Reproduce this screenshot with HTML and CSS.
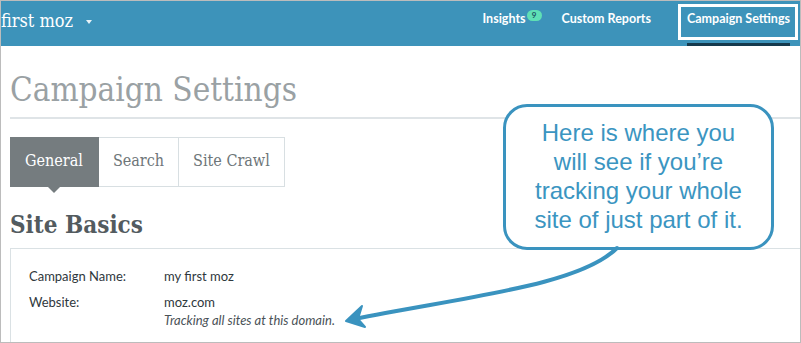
FILE: index.html
```html
<!DOCTYPE html>
<html lang="en">
	<head>
		<meta charset="UTF-8" />
		<meta name="viewport" content="width=device-width, initial-scale=1.0" />
		<title>Campaign Settings | first moz</title>
		<link rel="stylesheet" href="styles.css">
	</head>
	<body>
		<div class="window">
			<header class="topbar">
				<div class="brand">first moz<span class="caret"></span></div>
				<nav class="menu">
					<a class="menu-link" href="#">Insights<span class="badge">9</span></a>
					<a class="menu-link reports" href="#">Custom Reports</a>
					<a class="menu-link active" href="#">Campaign Settings</a>
				</nav>
			</header>
			<main class="page">
				<h1 class="page-title">Campaign Settings</h1>
				<ul class="tabs">
					<li class="tab current">General</li>
					<li class="tab">Search</li>
					<li class="tab">Site Crawl</li>
				</ul>
				<h2 class="section-title">Site Basics</h2>
				<div class="panel">
					<div class="field">
						<div class="field-label">Campaign Name:</div>
						<div class="field-value">my first moz</div>
					</div>
					<div class="field">
						<div class="field-label">Website:</div>
						<div class="field-value">
							moz.com
							<div class="field-note">Tracking all sites at this domain.</div>
						</div>
					</div>
				</div>
			</main>
			<!-- annotation -->
			<div class="callout">Here is where you<br />will see if you’re<br />tracking your whole<br />site of just part of it.</div>
			<svg class="arrow" width="801" height="343" viewBox="0 0 801 343">
				<path d="M617 248 C580 285 470 296 354 319" fill="none" stroke="#3a93bf" stroke-width="4" stroke-linecap="round" />
				<path d="M362 306 L346 321 L365 327 L358 319 Z" fill="#3a93bf" stroke="#3a93bf" stroke-width="2" stroke-linejoin="round" />
			</svg>
		</div>
	</body>
</html>
```

FILE: styles.css
```css
body {
	margin: 0;
	padding: 0;
	background: #fff;
	font-family: "Lato", "Liberation Sans", Arial, sans-serif;
}
.window {
	position: relative;
	width: 801px;
	height: 343px;
	box-sizing: border-box;
	border: 1px solid #bcbcbc;
	overflow: hidden;
	background: #fff;
}
.topbar {
	display: flex;
	align-items: flex-start;
	height: 45px;
	background: #3d93ba;
	color: #fff;
}
.brand {
	display: flex;
	align-items: center;
	padding-top: 10px;
	font-family: "DejaVu Serif Condensed", "DejaVu Serif", serif;
	font-size: 18px;
	line-height: 20px;
	white-space: nowrap;
}
.caret {
	width: 0;
	height: 0;
	margin-left: 13px;
	margin-top: 2px;
	border-left: 3.5px solid transparent;
	border-right: 3.5px solid transparent;
	border-top: 4px solid #e8f2f7;
}
.menu {
	display: flex;
	align-items: flex-start;
	margin-left: auto;
	margin-right: 2px;
	padding-top: 3px;
}
.menu-link {
	position: relative;
	display: flex;
	align-items: flex-start;
	padding: 7px 0;
	color: #fff;
	text-decoration: none;
	font-weight: 700;
	font-size: 12.5px;
	line-height: 16px;
	white-space: nowrap;
}
.badge {
	display: inline-block;
	width: 15px;
	height: 11px;
	margin-left: 1px;
	margin-top: -1px;
	border-radius: 6px;
	background: #5fe0b5;
	color: #1d5466;
	font-size: 8px;
	line-height: 11px;
	text-align: center;
}
.reports {
	margin-left: 20px;
	margin-right: 27px;
}
.active {
	padding: 4px 5px 10px 6px;
	border: 3px solid #fff;
}
.active::after {
	content: "";
	position: absolute;
	left: 6px;
	right: 5px;
	bottom: -9px;
	height: 3px;
	background: #153a4d;
}
.page {
	padding: 0 0 0 9px;
}
.page-title {
	margin: 24px 0 0 0;
	padding-bottom: 7px;
	border-bottom: 2px solid #dfe4e7;
	font-family: "DejaVu Serif Condensed", "DejaVu Serif", serif;
	font-weight: 400;
	font-size: 33px;
	line-height: 40px;
	color: #9aa1a4;
}
.tabs {
	display: flex;
	margin: 18px 0 0 0;
	padding: 0;
	list-style: none;
}
.tab {
	position: relative;
	height: 48px;
	padding: 0 14px 0 14px;
	border: 1px solid #d8dfe2;
	border-left: none;
	font-family: "DejaVu Serif Condensed", "DejaVu Serif", serif;
	font-size: 16px;
	line-height: 45px;
	color: #6e7679;
}
.tab.current {
	padding: 0 15px;
	border-color: #757c7f;
	background: #757c7f;
	color: #fff;
}
.tab.current::after {
	content: "";
	position: absolute;
	left: 50%;
	bottom: -7px;
	margin-left: -6px;
	border-left: 6px solid transparent;
	border-right: 6px solid transparent;
	border-top: 6px solid #757c7f;
}
.section-title {
	margin: 24px 0 9px 0;
	font-family: "DejaVu Serif Condensed", "DejaVu Serif", serif;
	font-weight: 700;
	font-size: 24px;
	line-height: 28px;
	color: #535b5f;
}
.panel {
	display: flex;
	flex-direction: column;
	gap: 8px;
	margin-right: -10px;
	padding: 18px 0 30px 18px;
	border: 1px solid #dae1e4;
}
.field {
	display: grid;
	grid-template-columns: 135px 1fr;
	font-size: 13px;
	line-height: 18px;
	color: #2f383d;
}
.field-note {
	font-style: italic;
	color: #4a5257;
}
.callout {
	position: absolute;
	left: 502px;
	top: 103px;
	width: 271px;
	height: 146px;
	box-sizing: border-box;
	padding: 11px 0 0 0;
	border: 3px solid #3a93bf;
	border-radius: 24px;
	background: #fff;
	font-family: "Liberation Sans", Arial, sans-serif;
	font-size: 24px;
	line-height: 29px;
	color: #3b95c1;
	text-align: center;
	white-space: nowrap;
}
.arrow {
	position: absolute;
	left: -1px;
	top: -1px;
	pointer-events: none;
}
```
